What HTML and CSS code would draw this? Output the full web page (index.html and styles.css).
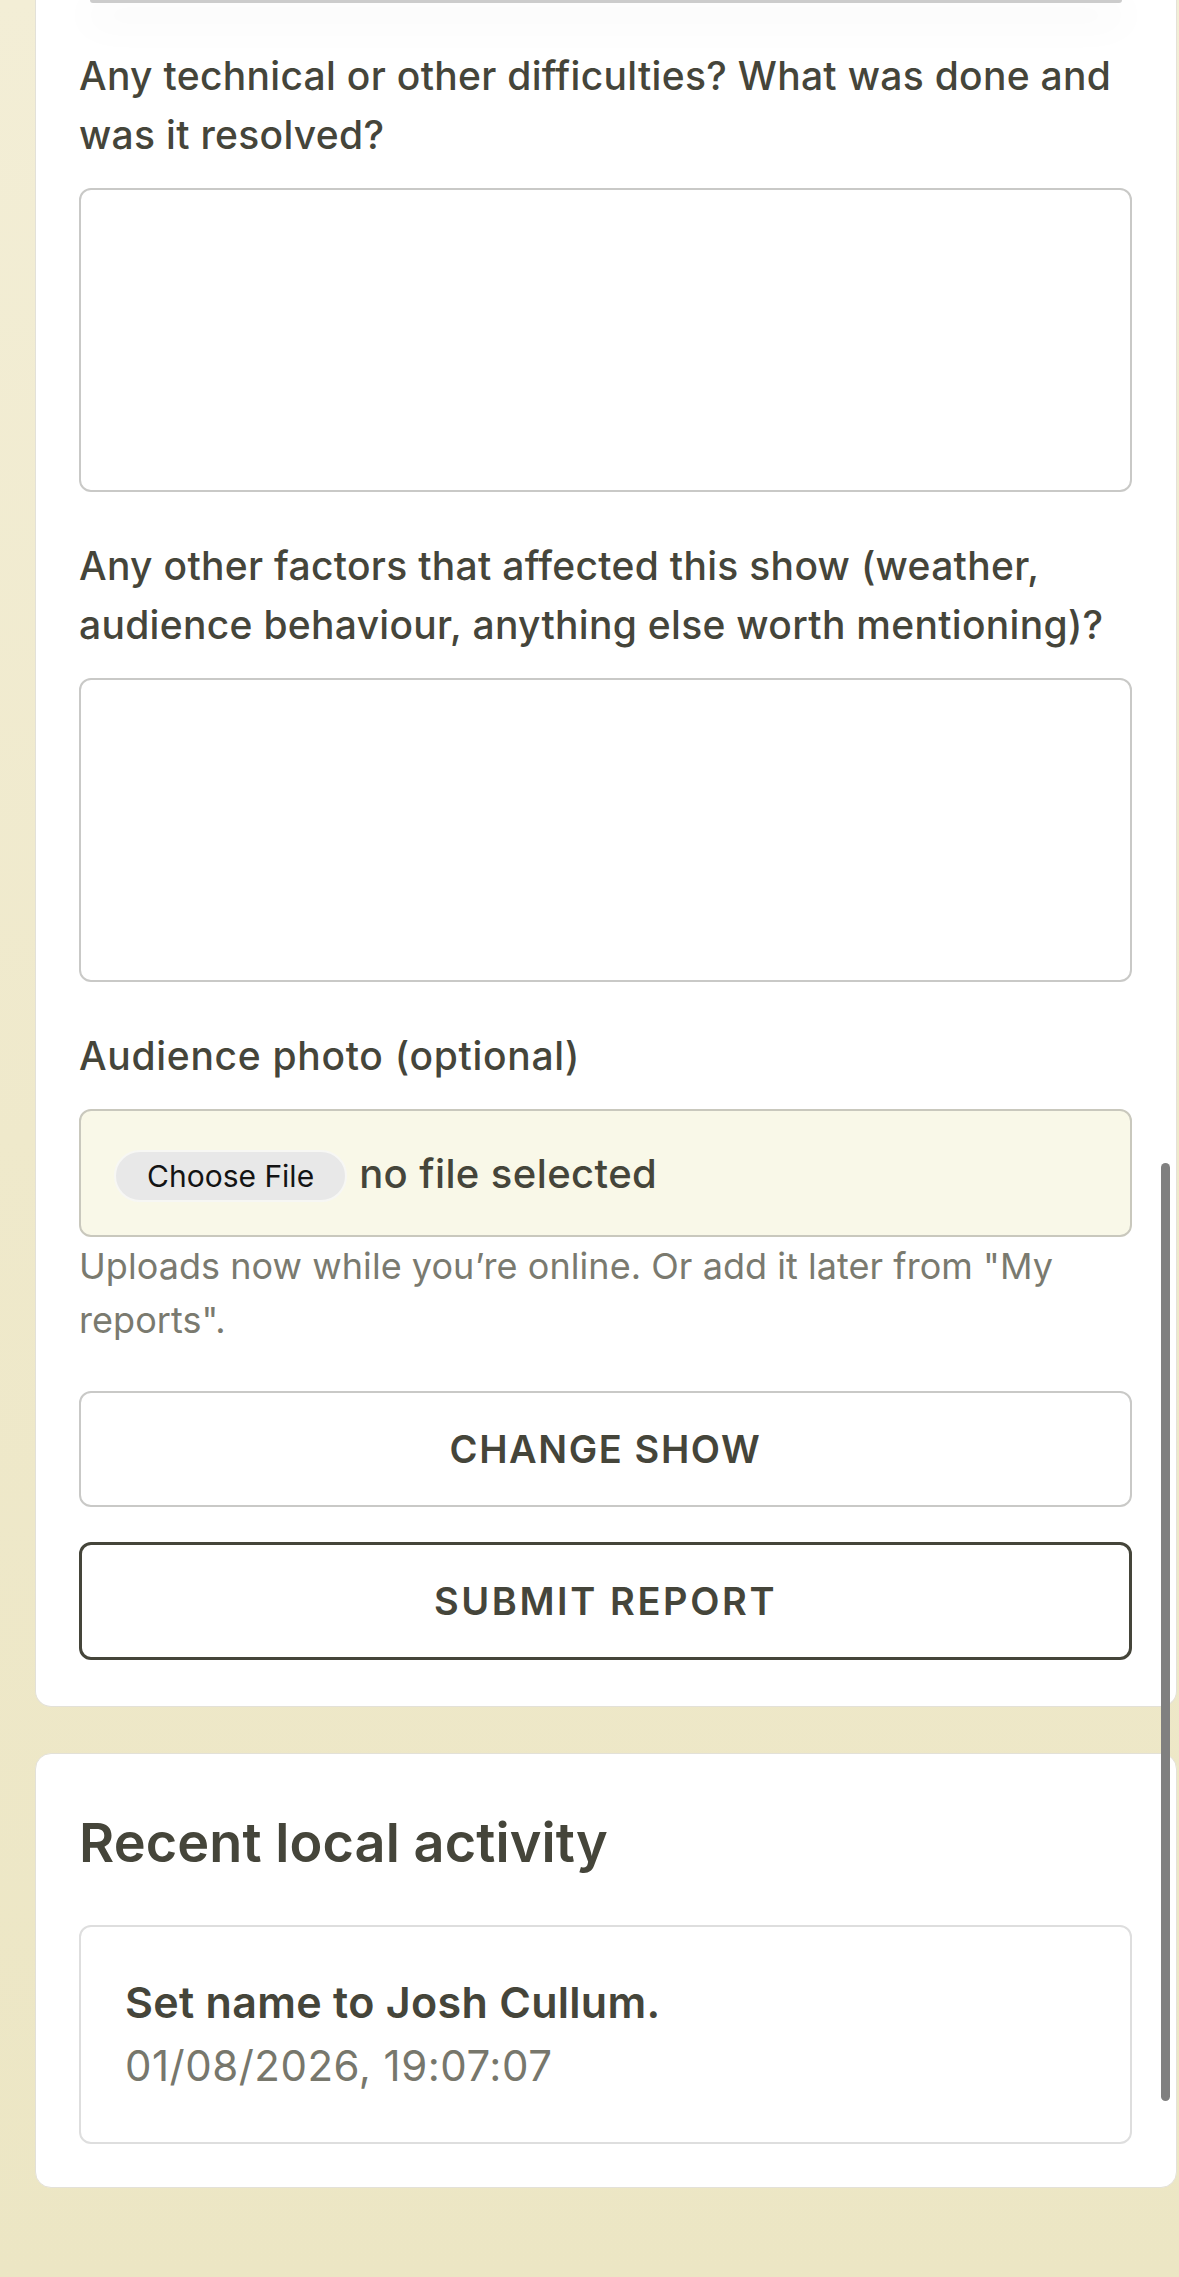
FILE: index.html
```html
<!DOCTYPE html>
<html lang="en">
<head>
<meta charset="utf-8">
<title>Show report</title>
<link rel="stylesheet" href="styles.css">
</head>
<body>
<main class="page">
  <section class="card report-card">
    <div class="prev-edge"></div>
    <form class="form">
      <div class="field">
        <label class="label" for="difficulties">Any technical or other difficulties? What was done and was it resolved?</label>
        <textarea id="difficulties" class="textarea"></textarea>
      </div>
      <div class="field">
        <label class="label" for="factors">Any other factors that affected this show (weather, audience behaviour, anything else worth mentioning)?</label>
        <textarea id="factors" class="textarea"></textarea>
      </div>
      <div class="field">
        <span class="label label-photo">Audience photo (optional)</span>
        <div class="file-group">
          <div class="file-box">
            <button type="button" class="file-button">Choose File</button>
            <span class="file-status">no file selected</span>
          </div>
          <p class="helper">Uploads now while you’re online. Or add it later from "My reports".</p>
        </div>
      </div>
      <div class="actions">
        <button type="button" class="btn btn-secondary">CHANGE SHOW</button>
        <button type="submit" class="btn btn-primary">SUBMIT REPORT</button>
      </div>
    </form>
  </section>

  <section class="card activity-card">
    <h2 class="activity-title">Recent local activity</h2>
    <div class="activity-item">
      <p class="activity-text">Set name to Josh Cullum.</p>
      <p class="activity-time">01/08/2026, 19:07:07</p>
    </div>
  </section>
</main>
<div class="scrollbar"></div>
</body>
</html>
```

FILE: styles.css
```css
* {
  box-sizing: border-box;
}

html, body {
  margin: 0;
  padding: 0;
}

body {
  min-height: 2277px;
  background: linear-gradient(180deg, #f3eed6 0%, #efe9cb 50%, #ece6c4 100%);
  font-family: Inter, "Noto Sans", sans-serif;
  color: #45453a;
}

.page {
  display: flex;
  flex-direction: column;
  gap: 46px;
  padding: 0 2px 88px 35px;
}

.card {
  background: #ffffff;
  border: 1px solid #e3e1d8;
  border-radius: 16px;
  padding: 44px 44px 43px 43px;
}

.report-card {
  border-top: none;
  border-top-left-radius: 0;
  border-top-right-radius: 0;
  padding-top: 0;
  padding-bottom: 46px;
}

.prev-edge {
  height: 3px;
  margin: 0 10px 0 11px;
  background: #cccccc;
  border-radius: 0 0 4px 4px;
  box-shadow: 0 14px 40px 6px rgba(0, 0, 0, 0.045);
}

.form {
  display: flex;
  flex-direction: column;
  gap: 44px;
  margin-top: 43px;
}

.field {
  display: flex;
  flex-direction: column;
  gap: 24px;
}

.label {
  display: block;
  font-size: 39px;
  line-height: 59px;
  font-weight: 500;
  color: #45453a;
  letter-spacing: 0.3px;
}

.label-photo {
  letter-spacing: 0.7px;
}

.textarea {
  display: block;
  width: 100%;
  height: 304px;
  border: 2.5px solid #c9c9c7;
  border-radius: 12px;
  background: #ffffff;
  resize: none;
  font: inherit;
}

.file-group {
  display: flex;
  flex-direction: column;
  gap: 2px;
}

.file-box {
  display: flex;
  align-items: center;
  gap: 12px;
  height: 128px;
  padding: 5px 34px 0 33px;
  background: #f9f8e8;
  border: 2.5px solid #c9c8bd;
  border-radius: 12px;
}

.file-button {
  height: 52px;
  padding: 0 31px;
  border: 2px solid #f7f7f4;
  border-radius: 26px;
  background: #e8e8e8;
  font-family: Inter, "Noto Sans", sans-serif;
  font-size: 30px;
  color: #141414;
}

.file-status {
  font-size: 40px;
  font-weight: 500;
  color: #45453a;
  letter-spacing: 0.4px;
  margin-top: -4px;
}

.helper {
  margin: 0;
  font-size: 36px;
  line-height: 54px;
  color: #7a7a6f;
  letter-spacing: 0.05px;
}

.actions {
  display: flex;
  flex-direction: column;
  gap: 35px;
}

.btn {
  display: block;
  width: 100%;
  background: #ffffff;
  border-radius: 12px;
  font-family: Inter, "Noto Sans", sans-serif;
  font-size: 38px;
  font-weight: 600;
  letter-spacing: 1.6px;
  color: #45453a;
}

.btn-secondary {
  height: 116px;
  border: 2.5px solid #c9c9c7;
}

.btn-primary {
  height: 118px;
  border: 3px solid #45453a;
  letter-spacing: 2.6px;
}

.activity-title {
  margin: 12px 0 50px;
  font-size: 54px;
  line-height: 65px;
  font-weight: 600;
  color: #45453a;
  letter-spacing: 0.1px;
}

.activity-item {
  border: 2px solid #dedede;
  border-radius: 12px;
  padding: 46px 44px 45px;
}

.activity-text {
  margin: 0;
  font-size: 43px;
  line-height: 59px;
  font-weight: 600;
  color: #45453a;
  letter-spacing: 0.3px;
}

.activity-time {
  margin: 2px 0 0;
  font-size: 42px;
  line-height: 63px;
  color: #77776c;
  letter-spacing: 0.5px;
}

.scrollbar {
  position: fixed;
  left: 1161px;
  top: 1163px;
  width: 9px;
  height: 938px;
  border-radius: 5px;
  background: #808080;
}
```
